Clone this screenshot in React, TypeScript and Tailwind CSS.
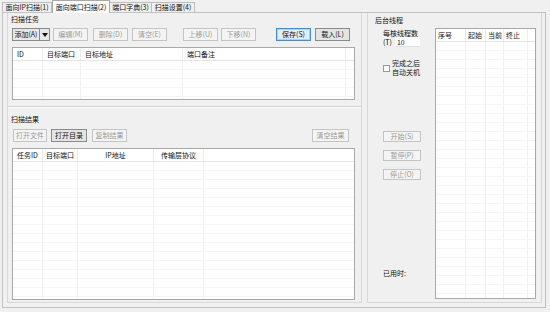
import React from "react";

type BtnProps = { label: string; w: number; kind?: "dis" | "on" | "def"; h?: number };

function Btn({ label, w, kind = "dis", h = 13 }: BtnProps) {
  const base = "flex items-center justify-center text-[7px] leading-none shrink-0 border whitespace-nowrap";
  const k =
    kind === "dis"
      ? "border-[#c4c4c4] bg-[#f4f4f4] text-[#9a9a9a]"
      : kind === "def"
      ? "border-[#3c8fe0] bg-[#e3eef9] text-[#111] shadow-[inset_0_0_0_1px_#a9d2f5]"
      : "border-[#8a8a8a] bg-[#e4e4e4] text-[#111]";
  return (
    <div className={`${base} ${k}`} style={{ width: w, height: h }}>
      {label}
    </div>
  );
}

type GridProps = {
  w: number;
  h: number;
  cols: number[];
  headers: string[];
  center?: boolean;
  tight?: boolean;
  headerH?: number;
  rowH?: number;
};

function Grid({ w, h, cols, headers, center = false, tight = false, headerH = 13, rowH = 9 }: GridProps) {
  const bodyH = h - 2 - headerH;
  const rows = Math.ceil(bodyH / rowH);
  const inner = w - 2;
  const used = cols.reduce((a, b) => a + b, 0);
  const rest = inner - used;
  return (
    <div
      className="border border-[#a8a8a8] bg-white overflow-hidden shrink-0"
      style={{ width: w, height: h }}
    >
      <div className="flex border-b border-[#e5e5e5] bg-white" style={{ height: headerH }}>
        {cols.map((c, i) => (
          <div
            key={i}
            className={`flex items-center border-r border-[#ececec] text-[7px] leading-none text-[#111] whitespace-nowrap overflow-hidden ${
              center ? "justify-center" : tight ? "pl-[2px]" : "pl-[4px]"
            }`}
            style={{ width: c }}
          >
            {headers[i]}
          </div>
        ))}
        <div style={{ width: rest }} />
      </div>
      {Array.from({ length: rows }).map((_, r) => (
        <div key={r} className="flex border-b border-[#f5f5f5]" style={{ height: rowH }}>
          {cols.map((c, i) => (
            <div key={i} className="border-r border-[#f1f1f1]" style={{ width: c }} />
          ))}
          <div style={{ width: rest }} />
        </div>
      ))}
    </div>
  );
}

export default function App() {
  return (
    <div className="relative w-[550px] h-[312px] bg-[#f0f0f0] overflow-hidden font-['Noto_Sans_CJK_SC','Liberation_Sans',sans-serif] text-[#111]">
      {/* tab strip */}
      <div className="flex items-end h-[12px] pl-[2px]">
        <div className="h-[10px] w-[50px] border border-b-0 border-[#bdbdbd] bg-[#f0f0f0] text-[7px] leading-none flex items-center justify-center whitespace-nowrap">
          面向IP扫描(1)
        </div>
        <div className="relative z-10 h-[13px] w-[58px] -mb-[1px] border border-b-0 border-[#a8a8a8] bg-[#fbfbfb] text-[7px] leading-none flex items-center justify-center whitespace-nowrap">
          面向端口扫描(2)
        </div>
        <div className="h-[10px] w-[42px] border border-b-0 border-l-0 border-[#bdbdbd] bg-[#f0f0f0] text-[7px] leading-none flex items-center justify-center whitespace-nowrap">
          端口字典(3)
        </div>
        <div className="h-[10px] w-[43px] border border-b-0 border-l-0 border-[#bdbdbd] bg-[#f0f0f0] text-[7px] leading-none flex items-center justify-center whitespace-nowrap">
          扫描设置(4)
        </div>
      </div>

      {/* main panel */}
      <div className="ml-[2px] w-[544px] h-[296px] border border-[#c2c2c2] bg-[#f0f0f0] pl-[4px] pb-[4px] flex">
        {/* left box */}
        <div className="w-[355px] h-full border-l border-r border-b border-[#d8d8d8] flex flex-col">
          <div className="pl-[4px] flex flex-col">
            <div className="mt-[2px] h-[9px] text-[7px] leading-[9px] -ml-[1px]">扫描任务</div>
            <div className="mt-[4px] flex items-center">
              <div className="flex">
                <div className="h-[13px] w-[28px] border border-[#8a8a8a] bg-[#e8e8e8] text-[7px] leading-none flex items-center justify-center whitespace-nowrap">
                  添加(A)
                </div>
                <div className="h-[13px] w-[10px] border border-l-0 border-[#8a8a8a] bg-[#e8e8e8] flex items-center justify-center">
                  <svg width="6" height="4" viewBox="0 0 6 4">
                    <path d="M0 0 H6 L3 4 Z" fill="#111" />
                  </svg>
                </div>
              </div>
              <div className="ml-[3px]">
                <Btn label="编辑(M)" w={35} />
              </div>
              <div className="ml-[5px]">
                <Btn label="删除(D)" w={35} />
              </div>
              <div className="ml-[4px]">
                <Btn label="清空(E)" w={35} />
              </div>
              <div className="ml-[16px]">
                <Btn label="上移(U)" w={35} />
              </div>
              <div className="ml-[3px]">
                <Btn label="下移(N)" w={35} />
              </div>
              <div className="ml-[20px]">
                <Btn label="保存(S)" w={35} kind="def" />
              </div>
              <div className="ml-[4px]">
                <Btn label="载入(L)" w={35} kind="on" />
              </div>
            </div>
            <div className="mt-[6px]">
              <Grid w={343} h={53} cols={[30, 38, 102, 163]} headers={["ID", "目标端口", "目标地址", "端口备注"]} />
            </div>
          </div>
          {/* separator */}
          <div className="mt-[6px] h-[2px] border-t border-[#d0d0d0] border-b border-b-white" />
          <div className="pl-[4px] flex flex-col">
            <div className="mt-[7px] h-[9px] text-[7px] leading-[9px] -ml-[1px]">扫描结果</div>
            <div className="mt-[5px] flex items-center">
              <div className="ml-[1px]">
                <Btn label="打开文件" w={34} />
              </div>
              <div className="ml-[4px]">
                <Btn label="打开目录" w={36} kind="on" />
              </div>
              <div className="ml-[5px]">
                <Btn label="复制结果" w={35} />
              </div>
              <div className="ml-[185px]">
                <Btn label="清空结果" w={37} />
              </div>
            </div>
            <div className="mt-[6px]">
              <Grid
                w={343}
                h={152}
                cols={[30, 35, 76, 50]}
                headers={["任务ID", "目标端口", "IP地址", "传输层协议"]}
                center
              />
            </div>
          </div>
        </div>

        {/* right box */}
        <div className="ml-[5px] w-[175px] h-full border-l border-r border-b border-[#d8d8d8] flex flex-col">
          <div className="pl-[7px] mt-[3px] h-[9px] text-[7px] leading-[9px]">后台线程</div>
          <div className="flex">
            <div className="w-[67px] pl-[15px] flex flex-col">
              <div className="mt-[4px] h-[8px] text-[7px] leading-[8px] whitespace-nowrap">每核线程数</div>
              <div className="flex items-center h-[10px]">
                <span className="text-[7px] leading-none">(T)</span>
                <div className="ml-[3px] w-[25px] h-[10px] bg-white border-b border-[#e0e0e0] text-[7px] leading-[10px] pl-[2px]">
                  10
                </div>
              </div>
              <div className="mt-[12px] flex items-center h-[18px]">
                <div className="w-[7px] h-[7px] border border-[#9a9a9a] bg-white shrink-0" />
                <div className="ml-[2px] text-[7px] leading-[9px] whitespace-nowrap">
                  完成之后
                  <br />
                  自动关机
                </div>
              </div>
              <div className="mt-[54px] flex flex-col gap-[8px]">
                <Btn label="开始(S)" w={38} h={11} />
                <Btn label="暂停(P)" w={38} h={11} />
                <Btn label="停止(O)" w={38} h={11} />
              </div>
              <div className="mt-[89px] text-[7px] leading-[8px]">已用时:</div>
            </div>
            <div className="mt-[3px]">
              <Grid w={101} h={271} cols={[30, 20, 18, 24]} headers={["序号", "起始", "当前", "终止"]} tight />
            </div>
          </div>
        </div>
      </div>
    </div>
  );
}
